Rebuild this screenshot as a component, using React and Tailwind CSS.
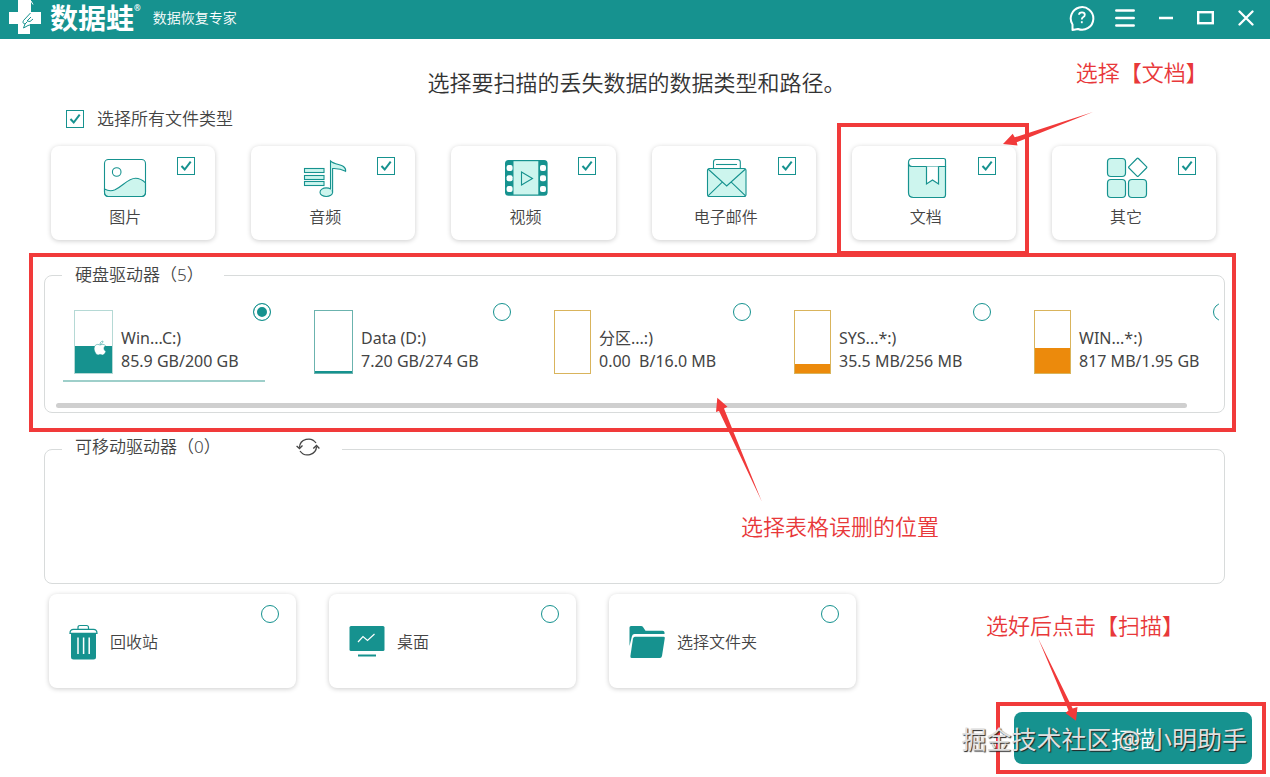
import { FaApple } from "react-icons/fa"

const TEAL = "#16928f"
const MINT = "#cdf5ee"

function PictureIcon() {
    return (
        <svg viewBox="0 0 44 44" className="w-11 h-11" fill="none" stroke={TEAL} strokeWidth="1.1">
            <path d="M1.5 33 C5 35 8 35.500 12 33.800 C20 30 25 22.300 32.500 22.300 C37 22.300 40 24.500 42.500 26.800 V36.500 Q42.500 40.500 38.500 40.500 H5.500 Q1.500 40.500 1.500 36.500 Z" fill={MINT} />
            <rect x="1.500" y="3.500" width="41" height="37" rx="4" />
            <circle cx="13.700" cy="16" r="4.300" />
        </svg>
    )
}

function MusicIcon() {
    return (
        <svg viewBox="0 0 44 44" className="w-11 h-11" fill={MINT} stroke={TEAL} strokeWidth="1.1">
            <rect x="1.500" y="12.500" width="19.500" height="4" />
            <rect x="1.500" y="19.500" width="19.500" height="4" />
            <rect x="1.500" y="25.500" width="19.500" height="4" />
            <ellipse cx="23.300" cy="36.200" rx="6.300" ry="4.300" />
            <path d="M27.500 33 V5 C31 8.300 37.500 8.500 40.500 10.500 C42.300 12 43 13.500 42.600 15.300 C38.500 13 34 12.300 29.600 12.500 V36.500" />
        </svg>
    )
}

function VideoIcon() {
    const holes = [12, 22.3, 33]
    return (
        <svg viewBox="0 0 44 44" className="w-11 h-11">
            <rect x="1" y="4" width="42.600" height="35.700" rx="3.500" fill={TEAL} />
            <rect x="9.500" y="5.200" width="24.800" height="33.300" fill={MINT} />
            {holes.map((y) => (
                <g key={y} fill="#fff">
                    <rect x="2.600" y={y - 3} width="6" height="6" rx="2" />
                    <rect x="36" y={y - 3} width="6" height="6" rx="2" />
                </g>
            ))}
            <path d="M17.500 16 L28.500 22.400 L17.500 29 Z" fill="none" stroke={TEAL} strokeWidth="1.1" />
        </svg>
    )
}

function MailIcon() {
    return (
        <svg viewBox="0 0 44 44" className="w-11 h-11" fill="none" stroke={TEAL} strokeWidth="1.1">
            <path d="M9.500 12 V6 Q9.500 3.500 12 3.500 H33.500 Q36.300 3.500 36.300 6 V12" />
            <path d="M12 8.500 H33" />
            <rect x="3.500" y="12.500" width="38.500" height="28" rx="2" fill={MINT} />
            <path d="M4 13 L22.700 30 L41.500 13 M4.300 39.700 L18 26.300 M41.300 39.700 L27.500 26.300" />
        </svg>
    )
}

function DocumentIcon() {
    return (
        <svg viewBox="0 0 44 44" className="w-11 h-11" fill="none" stroke={TEAL} strokeWidth="1.2">
            <path d="M4.500 7 V36.500 Q4.500 41.500 9.500 41.500 H39 Q41.500 41.500 41.500 39 V10.500 H8 Q4.500 10.500 4.500 7 Z" fill={MINT} />
            <path d="M41.500 10.500 V4.500 Q41.500 2.500 39.500 2.500 H9 Q4.500 2.500 4.500 6.500 Q4.500 10.500 8.500 10.500 Z" fill="#fff" />
            <path d="M22.500 10.500 V28 L28.500 24 L34.500 28 V10.500" fill="#fff" />
        </svg>
    )
}

function OtherIcon() {
    return (
        <svg viewBox="0 0 44 44" className="w-11 h-11" fill={MINT} stroke={TEAL} strokeWidth="1.2">
            <rect x="3.500" y="2.500" width="18" height="18" rx="3.500" />
            <rect x="3.500" y="23.500" width="18" height="18" rx="3.500" />
            <rect x="24.500" y="23.500" width="18" height="18" rx="3.500" />
            <rect x="27" y="4.600" width="13.400" height="13.400" rx="1" transform="rotate(45 33.700 11.300)" fill="#fff" />
        </svg>
    )
}

function TrashIcon() {
    return (
        <svg viewBox="0 0 29 36" className="w-[29px] h-9">
            <path d="M9 5 V3.500 Q9 1.500 11 1.500 H17.500 Q19.500 1.500 19.500 3.500 V5" fill="none" stroke={TEAL} strokeWidth="1.2" />
            <path d="M1 9.300 Q1 5.300 4.500 5.300 H24.500 Q28 5.300 28 9.300 Z" fill="#fff" stroke={TEAL} strokeWidth="1.2" />
            <path d="M2 9.500 H27 V33 Q27 35.500 24.500 35.500 H4.500 Q2 35.500 2 33 Z" fill={TEAL} />
            <path d="M9 13.500 V30 M14.600 13.500 V30 M20.200 13.500 V30" stroke="#fff" strokeWidth="1.5" />
        </svg>
    )
}

function DesktopIcon() {
    return (
        <svg viewBox="0 0 36 36" className="w-9 h-9">
            <rect x="0.500" y="2" width="35" height="25" rx="1.500" fill={TEAL} />
            <path d="M9 18 L14 12.500 L18.500 16.500 L25.500 10" fill="none" stroke="#fff" strokeWidth="1.2" />
            <path d="M9 31.500 H27" stroke={TEAL} strokeWidth="2" />
        </svg>
    )
}

function FolderIcon() {
    return (
        <svg viewBox="0 0 36 36" className="w-9 h-9" fill={TEAL}>
            <path d="M0.500 22 V3.500 Q0.500 2 2 2 H12 Q13.500 2 14 3 L16.500 6.800 H33.500 Q35.500 6.800 35.500 8.500 V10 H5.500 Q3.500 10 3 12 Z" />
            <path d="M6 12.700 H34.500 Q36 12.700 35.800 14 L33 32 Q32.500 34 31 34 H2.500 Q1.200 34 1.400 32 L4 14.500 Q4.500 12.700 6 12.700 Z" />
        </svg>
    )
}

function RefreshIcon() {
    return (
        <svg viewBox="0 0 24 20" className="w-6 h-5" fill="none" stroke="#444" strokeWidth="1.300">
            <path d="M20 6 A9 8.600 0 0 0 3.500 10.500 M4 14 A9 8.600 0 0 0 20.500 9.500" />
            <path d="M0.600 9 L3.500 11.500 L6.500 8.500 M17.300 11.500 L20.500 8.500 L23.400 11.500" />
        </svg>
    )
}

function Logo() {
    return (
        <svg viewBox="0 0 34 36" className="w-[34px] h-9" fill="none">
            <path d="M10 0 H23 V12 H33 V24 H22 V34 H10 V24 H1 V12 H10 Z" fill="#fff" />
            <path d="M22.500 13 L15.500 20.500 Q14 23.500 17 24 L19 22 M17 24 L15.500 28 L20 25.500 L23.500 24.500 M23 17 L19 21 Q22 23 25 19" stroke={TEAL} strokeWidth="1" />
            <path d="M23 1 L25 4.500" stroke="#fff" strokeWidth="1" />
        </svg>
    )
}

const fileTypes = [
    { label: "图片", Icon: PictureIcon },
    { label: "音频", Icon: MusicIcon },
    { label: "视频", Icon: VideoIcon },
    { label: "电子邮件", Icon: MailIcon },
    { label: "文档", Icon: DocumentIcon, marked: true },
    { label: "其它", Icon: OtherIcon },
]

const drives = [
    { name: "Win...C:)", size: "85.9 GB/200 GB", used: 43, system: true, gauge: "w-[39px] border-[#b5d9d5]", fill: "bg-[#16928f]" },
    { name: "Data (D:)", size: "7.20 GB/274 GB", used: 3, gauge: "w-[39px] border-[#6bb3ae]", fill: "bg-[#16928f]" },
    { name: "分区...:)", size: "0.00  B/16.0 MB", used: 0, gauge: "w-[37px] border-[#d9b45c]", fill: "bg-[#ec8a0c]" },
    { name: "SYS...*:)", size: "35.5 MB/256 MB", used: 14, gauge: "w-[37px] border-[#d9b45c]", fill: "bg-[#ec8a0c]" },
    { name: "WIN...*:)", size: "817 MB/1.95 GB", used: 41, gauge: "w-[37px] border-[#d9b45c]", fill: "bg-[#ec8a0c]" },
]

const places = [
    { label: "回收站", Icon: TrashIcon },
    { label: "桌面", Icon: DesktopIcon },
    { label: "选择文件夹", Icon: FolderIcon },
]

function Checkbox({ id }) {
    return (
        <span className="grid w-[18px] h-[18px] flex-none">
            <input id={id} type="checkbox" defaultChecked className="peer col-start-1 row-start-1 w-[18px] h-[18px] appearance-none border border-[#16928f] bg-white" />
            <svg viewBox="0 0 18 18" className="col-start-1 row-start-1 w-[18px] h-[18px] pointer-events-none hidden peer-checked:block" fill="none" stroke={TEAL} strokeWidth="2">
                <path d="M4.500 9 L7.700 12.500 L13.700 4.700" />
            </svg>
        </span>
    )
}

function Radio({ id, checked }) {
    return (
        <input
            id={id}
            type="radio"
            name="location"
            defaultChecked={checked}
            className="w-[18px] h-[18px] flex-none appearance-none rounded-full border border-[#16928f] bg-white checked:bg-[#16928f] checked:shadow-[inset_0_0_0_3px_white]"
        />
    )
}

function Arrow({ className, viewBox, points }) {
    return (
        <svg viewBox={viewBox} className={`absolute pointer-events-none z-10 ${className}`} fill="#f13a3a">
            <polygon points={points} />
        </svg>
    )
}

function Frame({ className }) {
    return <div className={`absolute pointer-events-none border-4 border-[#f13a3a] ${className}`} />
}

function Note({ className, children }) {
    return <p className={`absolute whitespace-nowrap text-[22px] leading-8 text-[#e8383a] ${className}`}>{children}</p>
}

function Header() {
    return (
        <header className="h-[39px] pl-2 pr-4 pb-1 bg-[#16928f] text-white flex items-center justify-between">
            <div className="flex items-center">
                <Logo />
                <p className="flex ml-2 text-[28px] leading-9 font-bold">
                    数据蛙<span className="text-[8px] leading-4">®</span>
                </p>
                <p className="ml-3 text-[14px]">数据恢复专家</p>
            </div>

            <div className="flex items-center">
                <button aria-label="帮助" className="mr-5">
                    <svg viewBox="0 0 26 28" className="w-[26px] h-7" fill="none" stroke="#fff" strokeWidth="2">
                        <path d="M3.500 26 V20.500 A11.300 11.300 0 1 1 9 25 Z" strokeLinejoin="round" />
                        <path d="M10 10.800 Q10 8.300 13 8.300 Q15.800 8.300 15.800 10.700 Q15.800 12.300 14 13.200 Q12.800 14 12.800 15.500" strokeWidth="1.800" />
                        <path d="M12.800 17.200 V19.200" strokeWidth="1.800" />
                    </svg>
                </button>
                <button aria-label="菜单" className="mr-6">
                    <svg viewBox="0 0 20 20" className="w-5 h-5" stroke="#fff" strokeWidth="2.500" strokeLinecap="round">
                        <path d="M1.300 2.500 H18.700 M1.300 10 H18.700 M1.300 17.500 H18.700" />
                    </svg>
                </button>
                <button aria-label="最小化" className="mr-6">
                    <svg viewBox="0 0 14 16" className="w-[14px] h-4" stroke="#fff" strokeWidth="2.500">
                        <path d="M0 8 H14" />
                    </svg>
                </button>
                <button aria-label="最大化" className="mr-6">
                    <svg viewBox="0 0 17 16" className="w-[17px] h-4" fill="none" stroke="#fff" strokeWidth="2.400">
                        <rect x="1.200" y="2.200" width="14.600" height="11" />
                    </svg>
                </button>
                <button aria-label="关闭">
                    <svg viewBox="0 0 16 16" className="w-4 h-4" stroke="#fff" strokeWidth="2.300" strokeLinecap="round">
                        <path d="M1.500 1.500 L14.500 14.500 M14.500 1.500 L1.500 14.500" />
                    </svg>
                </button>
            </div>
        </header>
    )
}

function TypeCard({ label, Icon, marked, id }) {
    return (
        <div className="relative">
            <label htmlFor={id} className="h-[94px] pr-5 bg-white rounded-lg shadow-[0_1px_5px_rgba(0,0,0,0.2)] flex items-start justify-end gap-5">
                <span className="w-16 pt-[10px] flex flex-col items-center">
                    <Icon />
                    <span className="mt-[5px] text-[16px] leading-6 whitespace-nowrap">{label}</span>
                </span>
                <span className="mt-[11px]">
                    <Checkbox id={id} />
                </span>
            </label>
            {marked && (
                <>
                    <Frame className="-left-[15px] -right-[13px] -top-[23px] -bottom-[15px]" />
                    <Arrow className="left-[151px] -top-[35px] w-[92px] h-[36px]" viewBox="1002 111 92 36" points="1002,144 1011.700,133.700 1013.700,137.300 1092,112 1015.700,142.300 1016.500,145.500" />
                    <Note className="left-[224px] -top-[90px]">选择【文档】</Note>
                </>
            )}
        </div>
    )
}

function Drive({ drive, id, checked }) {
    return (
        <div className="w-[208px] flex-none">
            <label htmlFor={id} className="pl-[11px] flex items-start gap-2">
                <span className={`relative h-16 mt-[7px] flex-none border flex flex-col justify-end ${drive.gauge}`}>
                    <span className={drive.fill} style={{ height: `${drive.used}%` }} />
                    {drive.system && <FaApple className="absolute right-[5px] bottom-[17px] w-[14px] h-[16px] text-white" stroke={TEAL} strokeWidth="16" />}
                </span>
                <span className="mt-6 text-[16px] leading-[23px] font-normal whitespace-pre">
                    {drive.name}
                    <br />
                    {drive.size}
                </span>
                <span className="ml-auto flex">
                    <Radio id={id} checked={checked} />
                </span>
            </label>
            <div className={`h-[2px] mt-[6px] mr-[6px] ${checked ? "bg-[#9ecfca]" : ""}`} />
        </div>
    )
}

export default function App() {
    return (
        <div className="min-h-screen overflow-hidden bg-white text-[#444] font-[350] font-['Noto_Sans','Noto_Sans_CJK_SC',sans-serif]">
            <Header />

            <main className="pl-11 pr-[45px]">
                <h1 className="mt-[27px] pl-1 text-[22px] leading-8 text-center font-[350] text-[#333]">选择要扫描的丢失数据的数据类型和路径。</h1>

                <div className="h-6 mt-[9px] pl-[22px] flex items-center gap-[13px]">
                    <Checkbox id="all-types" />
                    <label htmlFor="all-types" className="text-[17px] leading-6">选择所有文件类型</label>
                </div>

                <div className="mt-[15px] pl-[7px] pr-[9px] grid grid-cols-6 gap-9">
                    {fileTypes.map((type, i) => (
                        <TypeCard key={type.label} id={`type-${i}`} {...type} />
                    ))}
                </div>

                <div className="relative mt-[23px]">
                    <fieldset className="min-w-0 pb-1 border border-[#d8dbdb] rounded-lg">
                        <legend className="w-[162px] ml-[17px] pl-[13px] text-[17px] leading-6">硬盘驱动器（5）</legend>
                        <div className="ml-[18px] mr-[5px] pt-4 flex gap-8 overflow-hidden">
                            {drives.map((drive, i) => (
                                <Drive key={drive.name} id={`drive-${i}`} drive={drive} checked={i === 0} />
                            ))}
                        </div>
                        <div className="h-[5px] mt-[21px] ml-[11px] mr-[37px] rounded-full bg-[#cfcfcf]" />
                    </fieldset>
                    <Frame className="-left-[15px] -right-[11px] -top-[10px] -bottom-[19px]" />
                    <Arrow className="left-[671px] top-[134px] w-[48px] h-[106px]" viewBox="715 397 48 106" points="717.300,397.700 727.500,406.700 724,408.500 762,502 719,411 716,412" />
                    <Note className="left-[697px] top-[247px]">选择表格误删的位置</Note>
                </div>

                <fieldset className="min-w-0 mt-6 border border-[#d8dbdb] rounded-lg">
                    <legend className="w-[280px] ml-[17px] pl-[13px] pr-[22px] pb-1 text-[17px] leading-5">
                        <span className="flex items-center justify-between">
                            可移动驱动器（0）
                            <button aria-label="刷新">
                                <RefreshIcon />
                            </button>
                        </span>
                    </legend>
                    <div className="h-[122px]" />
                </fieldset>

                <div className="max-w-[812px] mt-[10px] pl-[5px] grid grid-cols-3 gap-[33px]">
                    {places.map(({ label, Icon }, i) => (
                        <label key={label} htmlFor={`place-${i}`} className="h-[94px] pl-5 pr-[17px] pt-[2px] bg-white rounded-lg shadow-[0_1px_5px_rgba(0,0,0,0.2)] flex items-center gap-3">
                            <Icon />
                            <span className="text-[16px] leading-6">{label}</span>
                            <span className="self-start mt-[9px] ml-auto flex">
                                <Radio id={`place-${i}`} />
                            </span>
                        </label>
                    ))}
                </div>
            </main>

            <footer className="mt-6 pb-[13px] pr-[18px] flex justify-end">
                <div className="relative">
                    <button className="w-[238px] h-[52px] rounded-lg bg-[#16928f] text-white text-[22px]">扫描</button>
                    <Frame className="-left-[18px] -right-[14px] -top-[10px] -bottom-[10px]" />
                    <Arrow className="left-[23px] -top-[75px] w-[42px] h-[84px]" viewBox="1037 637 42 84" points="1038,638 1072.700,708.500 1077.500,707 1076,720.700 1065.500,713 1068.500,710.500" />
                    <Note className="-left-[28px] -top-[103px]">选好后点击【扫描】</Note>
                    <p className="absolute right-[5px] top-[9px] whitespace-nowrap text-[25px] leading-9 font-normal text-[#e0e0e0] pointer-events-none [text-shadow:1px_1px_1px_#222]">
                        掘金技术社区 @ 小明助手
                    </p>
                </div>
            </footer>
        </div>
    )
}
